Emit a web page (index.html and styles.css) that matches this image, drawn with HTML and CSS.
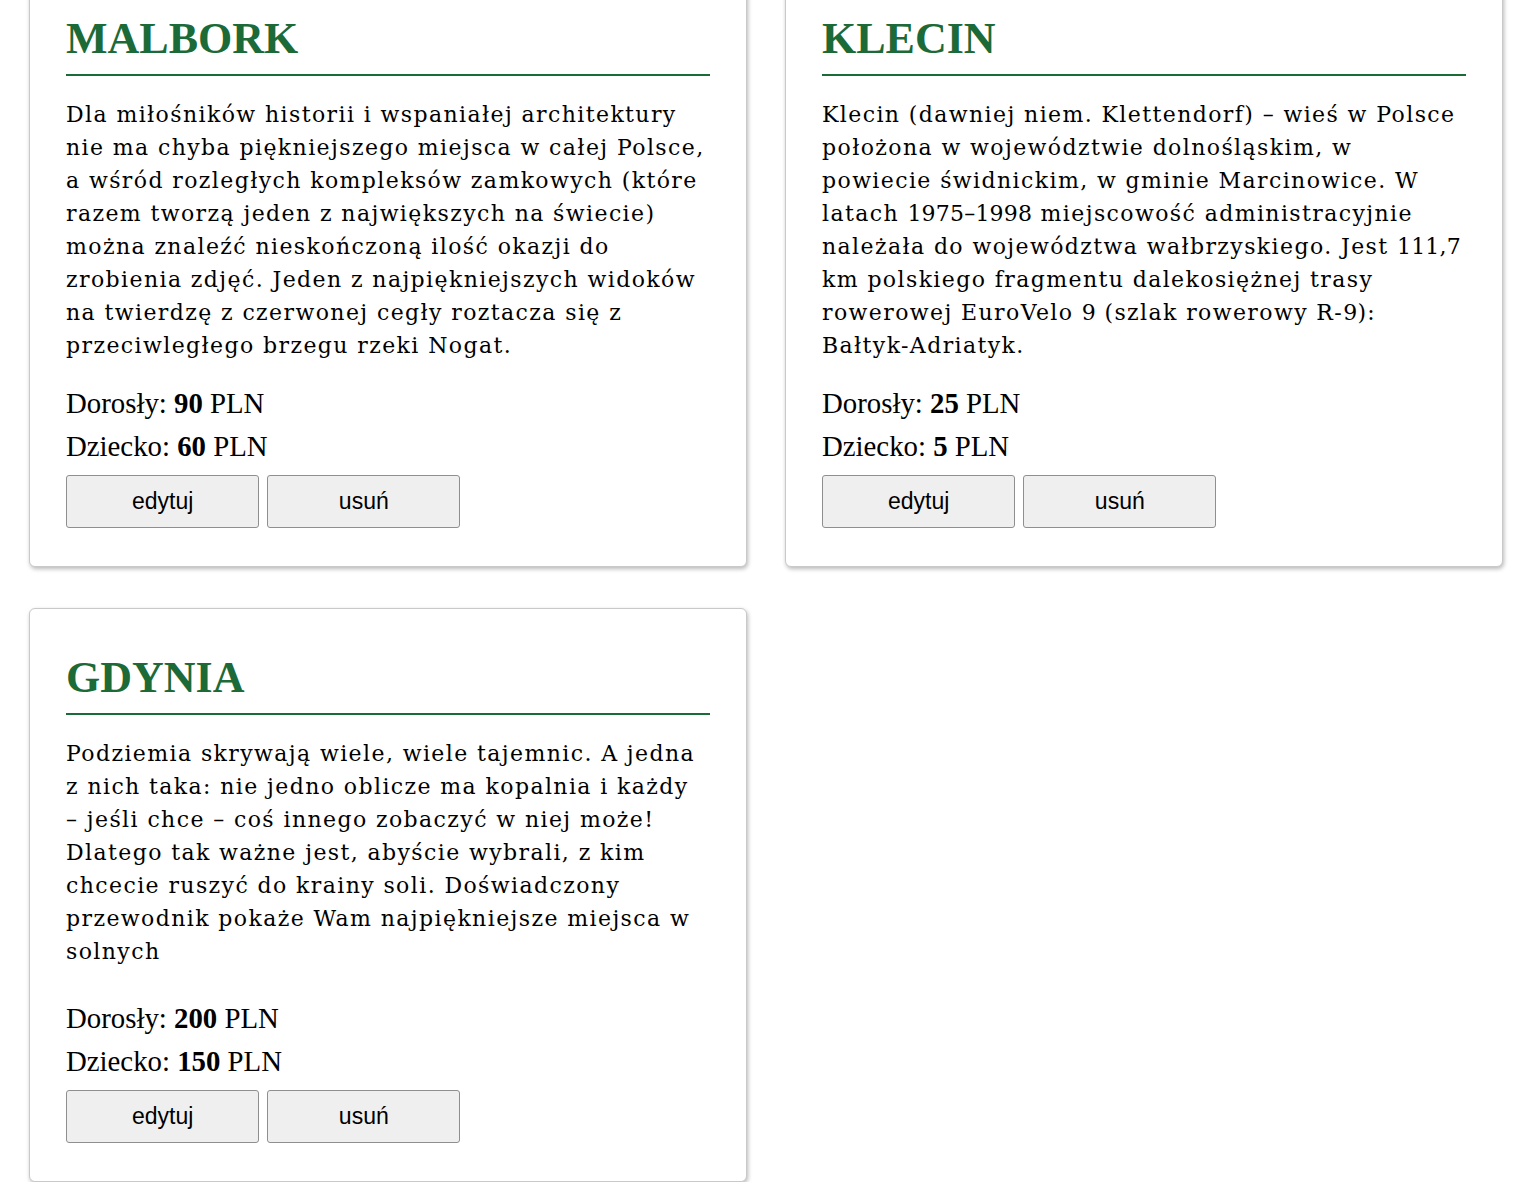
FILE: index.html
```html
<!DOCTYPE html>
<html lang="pl">
<head>
<meta charset="utf-8">
<title>Wycieczki</title>
<link rel="stylesheet" href="styles.css">
</head>
<body>
<main class="list">
  <article class="card">
    <h2 class="card-title">MALBORK</h2>
    <p class="card-desc">Dla miłośników historii i wspaniałej architektury nie ma chyba piękniejszego miejsca w całej Polsce, a wśród rozległych kompleksów zamkowych (które razem tworzą jeden z największych na świecie) można znaleźć nieskończoną ilość okazji do zrobienia zdjęć. Jeden z najpiękniejszych widoków na twierdzę z czerwonej cegły roztacza się z przeciwległego brzegu rzeki Nogat.</p>
    <div class="price price-first">Dorosły: <b>90</b> PLN</div>
    <div class="price">Dziecko: <b>60</b> PLN</div>
    <div class="actions">
      <button class="btn" type="button">edytuj</button>
      <button class="btn" type="button">usuń</button>
    </div>
  </article>
  <article class="card">
    <h2 class="card-title">KLECIN</h2>
    <p class="card-desc">Klecin (dawniej niem. Klettendorf) –&#8288;&nbsp;wieś w Polsce położona w województwie dolnośląskim, w powiecie świdnickim, w gminie Marcinowice. W latach <span class="num">1975–1998</span> miejscowość administracyjnie należała do województwa wałbrzyskiego. Jest <span class="num">111,7</span> km polskiego fragmentu dalekosiężnej trasy rowerowej EuroVelo <span class="num">9</span> (szlak rowerowy R-<span class="num">9</span>): Bałtyk-Adriatyk.</p>
    <div class="price price-first">Dorosły: <b>25</b> PLN</div>
    <div class="price">Dziecko: <b>5</b> PLN</div>
    <div class="actions">
      <button class="btn" type="button">edytuj</button>
      <button class="btn" type="button">usuń</button>
    </div>
  </article>
  <article class="card">
    <h2 class="card-title">GDYNIA</h2>
    <p class="card-desc">Podziemia skrywają wiele, wiele tajemnic. A jedna z nich taka: nie jedno oblicze ma kopalnia i każdy –&#8288;&nbsp;jeśli chce –&#8288;&nbsp;coś innego zobaczyć w niej może! Dlatego tak ważne jest, abyście wybrali, z kim chcecie ruszyć do krainy soli. Doświadczony przewodnik pokaże Wam najpiękniejsze miejsca w solnych</p>
    <div class="price price-first">Dorosły: <b>200</b> PLN</div>
    <div class="price">Dziecko: <b>150</b> PLN</div>
    <div class="actions">
      <button class="btn" type="button">edytuj</button>
      <button class="btn" type="button">usuń</button>
    </div>
  </article>
</main>
</body>
</html>
```
FILE: styles.css
```css
html, body {
  margin: 0;
  padding: 0;
  background: #ffffff;
}

body {
  font-family: "Liberation Serif", "Times New Roman", serif;
  color: #000;
}

.list {
  display: grid;
  grid-template-columns: 718px 718px;
  column-gap: 38px;
  row-gap: 41px;
  align-items: start;
  margin-top: -31px;
  padding-left: 29px;
}

.card {
  border: 1px solid #c9c9c9;
  border-radius: 6px;
  padding: 36px 36px 38px;
  box-shadow: 1px 2px 4px rgba(0, 0, 0, 0.28);
  background: #fff;
}

.card-title {
  margin: 9px 0 0;
  padding-bottom: 11px;
  border-bottom: 2px solid #1b6a37;
  color: #1b6a37;
  font-family: "Liberation Serif", "Times New Roman", serif;
  font-weight: bold;
  font-size: 44px;
  line-height: 48px;
}

.card-desc {
  margin: 22px 0 0;
  min-height: 240px;
  font-family: "DejaVu Serif", serif;
  font-size: 22px;
  line-height: 33px;
  letter-spacing: 1.4px;
}

.num {
  letter-spacing: 0.2px;
}

.price {
  margin-top: 10px;
  font-size: 28.8px;
  line-height: 33px;
}

.price-first {
  margin-top: 25px;
}

.actions {
  display: flex;
  gap: 8px;
  margin-top: 12px;
}

.btn {
  width: 30%;
  height: 53px;
  padding: 0;
  background: #efefef;
  border: 1px solid #8f8f8f;
  border-radius: 3px;
  font-family: "Liberation Sans", Arial, sans-serif;
  font-size: 23px;
  color: #000;
}
```
